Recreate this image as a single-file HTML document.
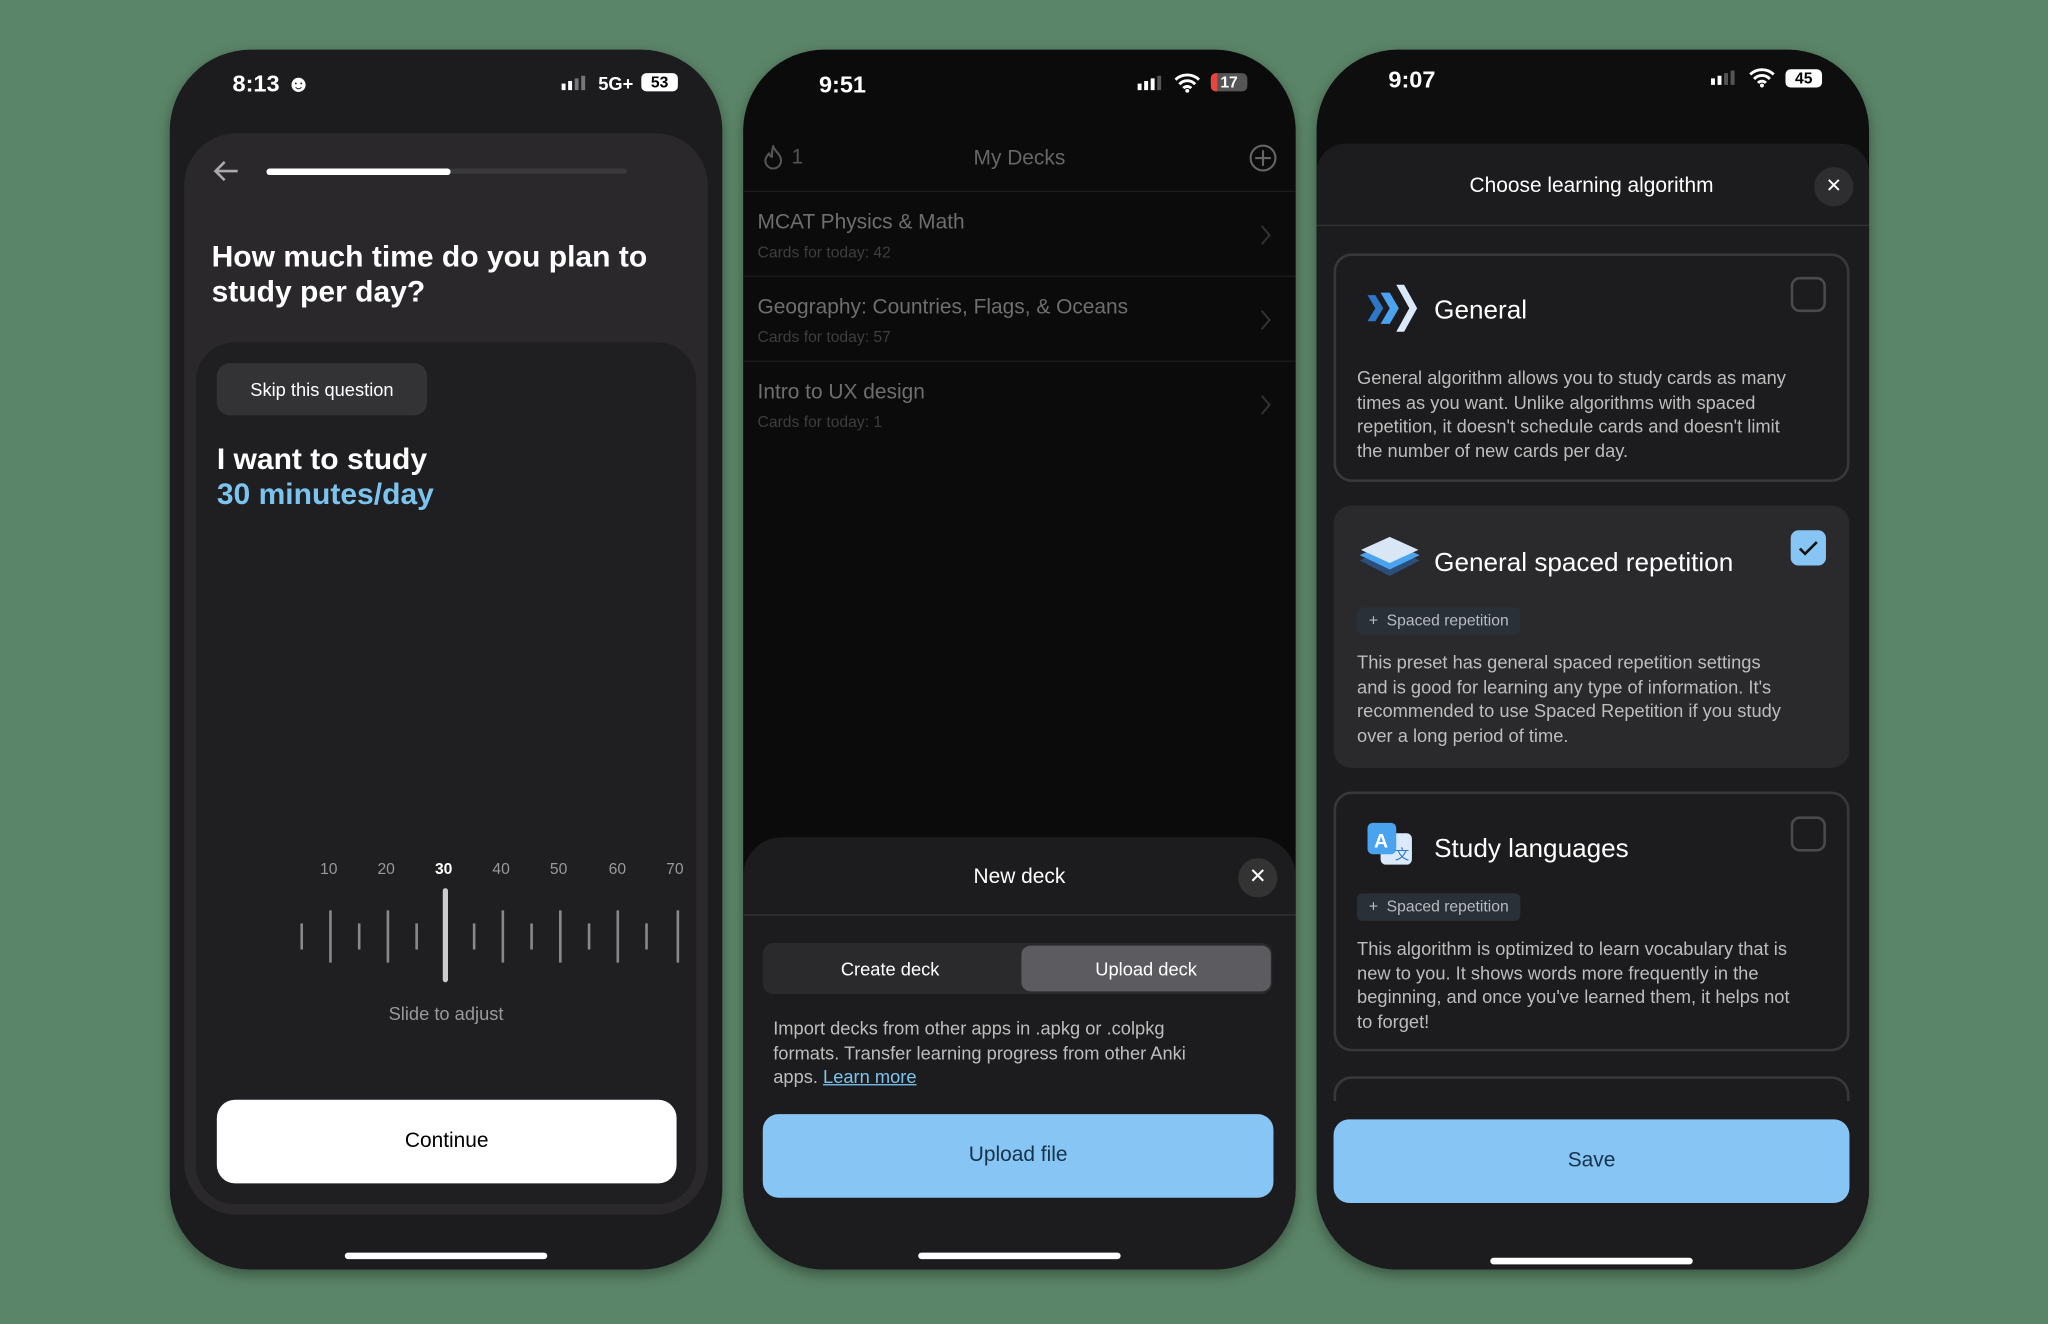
<!DOCTYPE html>
<html><head><meta charset="utf-8"><style>
*{margin:0;padding:0;box-sizing:border-box}
html,body{width:2048px;height:1324px;overflow:hidden;background:#5b8568}
#w{position:absolute;left:0;top:0;width:1568px;height:1014px;transform:scale(1.306122);transform-origin:0 0;font-family:"Liberation Sans",sans-serif;color:#fff}
.a{position:absolute}
.ph{position:absolute;top:38px;width:423px;height:934px;border-radius:62px;overflow:hidden;box-shadow:0 4px 10px rgba(0,0,0,.35)}
.time{position:absolute;font-size:18px;font-weight:bold}
.hi{position:absolute;height:5px;border-radius:3px;background:#fff;width:155px}
.t{white-space:nowrap}
.desc{font-size:14px;color:#bdbdbd;line-height:18.5px;white-space:nowrap}
.chip{position:absolute;left:18px;height:21px;padding:0 9px;background:#2a3038;border-radius:4px;font-size:12px;color:#b8bcc2;line-height:21px}
.cb{position:absolute;width:27px;height:27px;border:2px solid #4a4a4e;border-radius:7px}
</style></head><body><div id="w">

<!-- Phone 1 -->
<div class="ph" style="left:130px;background:#1c1b1d">
 <div class="time" style="left:48px;top:16px">8:13 ☻</div>
 <div class="a" style="left:300px;top:20px;width:22px;height:12px">
  <div class="a" style="left:0;top:6px;width:3px;height:5px;background:#fff"></div>
  <div class="a" style="left:5px;top:4px;width:3px;height:7px;background:#fff"></div>
  <div class="a" style="left:10px;top:2px;width:3px;height:9px;background:#777"></div>
  <div class="a" style="left:15px;top:0;width:3px;height:11px;background:#777"></div>
 </div>
 <div class="a t" style="left:328px;top:18px;font-size:14px;font-weight:bold">5G+</div>
 <div class="a" style="left:361px;top:18px;width:28px;height:14px;border-radius:4px;background:#fff;color:#000;font-size:12px;font-weight:bold;text-align:center;line-height:14px">53</div>
 <div class="a" style="left:11px;top:64px;width:401px;height:828px;background:#2a282b;border-radius:40px"></div>
 <svg class="a" style="left:32px;top:84px" width="22" height="18" viewBox="0 0 22 18"><path d="M20 9H3M10 2L3 9l7 7" stroke="#aaa" stroke-width="2" fill="none"/></svg>
 <div class="a" style="left:74px;top:91px;width:276px;height:4px;background:#3a393c;border-radius:2px"></div>
 <div class="a" style="left:74px;top:91px;width:141px;height:5px;background:#fff;border-radius:3px"></div>
 <div class="a" style="left:32px;top:145px;font-size:23px;font-weight:bold;line-height:27px">How much time do you plan to<br>study per day?</div>
 <div class="a" style="left:20px;top:224px;width:383px;height:660px;background:#1f1e20;border-radius:30px"></div>
 <div class="a t" style="left:36px;top:240px;width:161px;height:40px;background:#333235;border-radius:10px;font-size:14px;text-align:center;line-height:40px">Skip this question</div>
 <div class="a" style="left:36px;top:300px;font-size:23px;font-weight:bold;line-height:27px">I want to study<br><span style="color:#7cc4f0">30 minutes/day</span></div>
 <div class="a" style="left:0;top:620px;width:423px;height:16px;font-size:12px;color:#999">
  <span class="a" style="left:115px">10</span><span class="a" style="left:159px">20</span><span class="a" style="left:203px;color:#fff;font-weight:bold">30</span><span class="a" style="left:247px">40</span><span class="a" style="left:291px">50</span><span class="a" style="left:336px">60</span><span class="a" style="left:380px">70</span>
 </div>
 <svg class="a" style="left:0;top:640px" width="423" height="80">
  <g stroke="#888" stroke-width="2">
   <line x1="101" y1="29" x2="101" y2="49"/><line x1="123" y1="19" x2="123" y2="59"/><line x1="145" y1="29" x2="145" y2="49"/><line x1="167" y1="19" x2="167" y2="59"/><line x1="189" y1="29" x2="189" y2="49"/>
   <line x1="233" y1="29" x2="233" y2="49"/><line x1="255" y1="19" x2="255" y2="59"/><line x1="277" y1="29" x2="277" y2="49"/><line x1="299" y1="19" x2="299" y2="59"/><line x1="321" y1="29" x2="321" y2="49"/><line x1="343" y1="19" x2="343" y2="59"/><line x1="365" y1="29" x2="365" y2="49"/><line x1="389" y1="19" x2="389" y2="59"/>
  </g>
  <line x1="211" y1="4" x2="211" y2="72" stroke="#ccc" stroke-width="4" stroke-linecap="round"/>
 </svg>
 <div class="a t" style="left:0;width:423px;text-align:center;top:730px;font-size:14px;color:#999">Slide to adjust</div>
 <div class="a" style="left:36px;top:804px;width:352px;height:64px;background:#fff;border-radius:14px;color:#000;font-size:16px;text-align:center;line-height:64px">Continue</div>
 <div class="hi" style="left:134px;top:921px"></div>
</div>

<!-- Phone 2 -->
<div class="ph" style="left:569px;background:#0b0b0b">
 <div class="time" style="left:58px;top:17px">9:51</div>
 <div class="a" style="left:302px;top:20px;width:22px;height:12px">
  <div class="a" style="left:0;top:6px;width:3px;height:5px;background:#fff"></div>
  <div class="a" style="left:5px;top:4px;width:3px;height:7px;background:#fff"></div>
  <div class="a" style="left:10px;top:2px;width:3px;height:9px;background:#fff"></div>
  <div class="a" style="left:15px;top:0;width:3px;height:11px;background:#555"></div>
 </div>
 <svg class="a" style="left:330px;top:18px" width="20" height="15" viewBox="0 0 20 15"><path d="M1 5a13 13 0 0 1 18 0M4 8.5a8 8 0 0 1 12 0M7 11.5a4 4 0 0 1 6 0" stroke="#fff" stroke-width="2.2" fill="none"/><circle cx="10" cy="13.5" r="1.5" fill="#fff"/></svg>
 <div class="a" style="left:358px;top:18px;width:28px;height:14px;border-radius:4px;background:#555;overflow:hidden;font-size:12px;font-weight:bold;text-align:center;line-height:14px"><div class="a" style="left:0;top:0;width:5px;height:14px;background:#e8453c"></div><span style="position:relative">17</span></div>
 <svg class="a" style="left:15px;top:73px" width="16" height="20" viewBox="0 0 16 20"><path d="M8 1c1 4 6 6 6 11a6 6 0 0 1-12 0c0-3 2-4 3-6 0 2 1 3 2 3 0-3 0-5 1-8z" stroke="#555" stroke-width="1.6" fill="none"/></svg>
 <div class="a t" style="left:37px;top:74px;font-size:16px;color:#555">1</div>
 <div class="a t" style="left:0;width:423px;text-align:center;top:75px;font-size:16px;color:#666">My Decks</div>
 <svg class="a" style="left:387px;top:72px" width="22" height="22" viewBox="0 0 22 22"><circle cx="11" cy="11" r="9.5" stroke="#666" stroke-width="1.6" fill="none"/><path d="M11 5v12M5 11h12" stroke="#666" stroke-width="1.6"/></svg>
 <div class="a" style="left:0;top:108px;width:423px;height:1px;background:#1c1c1c"></div>
 <div class="a" style="left:0;top:173px;width:423px;height:1px;background:#1c1c1c"></div>
 <div class="a" style="left:0;top:238px;width:423px;height:1px;background:#1c1c1c"></div>
 <div class="a t" style="left:11px;top:124px;font-size:16px;color:#6e6e6e">MCAT Physics &amp; Math</div>
 <div class="a t" style="left:11px;top:148px;font-size:12px;color:#3e3e3e">Cards for today: 42</div>
 <div class="a t" style="left:11px;top:189px;font-size:16px;color:#6e6e6e">Geography: Countries, Flags, &amp; Oceans</div>
 <div class="a t" style="left:11px;top:213px;font-size:12px;color:#3e3e3e">Cards for today: 57</div>
 <div class="a t" style="left:11px;top:254px;font-size:16px;color:#6e6e6e">Intro to UX design</div>
 <div class="a t" style="left:11px;top:278px;font-size:12px;color:#3e3e3e">Cards for today: 1</div>
 <svg class="a" style="left:395px;top:133px" width="10" height="180"><g stroke="#333" stroke-width="1.5" fill="none"><path d="M2 2l6 7-6 7"/><path d="M2 67l6 7-6 7"/><path d="M2 132l6 7-6 7"/></g></svg>
 <div class="a" style="left:0;top:603px;width:423px;height:340px;background:#1c1c1e;border-radius:30px 30px 0 0"></div>
 <div class="a t" style="left:0;width:423px;text-align:center;top:625px;font-size:16px">New deck</div>
 <div class="a" style="left:379px;top:619px;width:30px;height:30px;border-radius:50%;background:#333;font-size:16px;text-align:center;line-height:30px">✕</div>
 <div class="a" style="left:0;top:662px;width:423px;height:1px;background:#333"></div>
 <div class="a" style="left:15px;top:684px;width:390px;height:39px;background:#2a2a2c;border-radius:8px"></div>
 <div class="a" style="left:213px;top:686px;width:191px;height:35px;background:#5c5c60;border-radius:7px"></div>
 <div class="a t" style="left:15px;width:195px;text-align:center;top:696px;font-size:14px">Create deck</div>
 <div class="a t" style="left:213px;width:191px;text-align:center;top:696px;font-size:14px">Upload deck</div>
 <div class="a desc" style="left:23px;top:740px">Import decks from other apps in .apkg or .colpkg<br>formats. Transfer learning progress from other Anki<br>apps. <span style="color:#7cc4f0;text-decoration:underline">Learn more</span></div>
 <div class="a" style="left:15px;top:815px;width:391px;height:64px;background:#86c5f4;border-radius:12px;color:#17324a;font-size:16px;text-align:center;line-height:64px">Upload file</div>
 <div class="hi" style="left:134px;top:921px"></div>
</div>

<!-- Phone 3 -->
<div class="ph" style="left:1008px;background:#0e0e0f">
 <div class="time" style="left:55px;top:13px">9:07</div>
 <div class="a" style="left:302px;top:16px;width:22px;height:12px">
  <div class="a" style="left:0;top:6px;width:3px;height:5px;background:#fff"></div>
  <div class="a" style="left:5px;top:4px;width:3px;height:7px;background:#fff"></div>
  <div class="a" style="left:10px;top:2px;width:3px;height:9px;background:#555"></div>
  <div class="a" style="left:15px;top:0;width:3px;height:11px;background:#555"></div>
 </div>
 <svg class="a" style="left:331px;top:14px" width="20" height="15" viewBox="0 0 20 15"><path d="M1 5a13 13 0 0 1 18 0M4 8.5a8 8 0 0 1 12 0M7 11.5a4 4 0 0 1 6 0" stroke="#fff" stroke-width="2.2" fill="none"/><circle cx="10" cy="13.5" r="1.5" fill="#fff"/></svg>
 <div class="a" style="left:359px;top:15px;width:28px;height:14px;border-radius:4px;background:#fff;color:#000;font-size:12px;font-weight:bold;text-align:center;line-height:14px">45</div>
 <div class="a" style="left:0;top:72px;width:423px;height:870px;background:#1c1b1d;border-radius:22px 22px 0 0"></div>
 <div class="a t" style="left:0;width:421px;text-align:center;top:96px;font-size:16px">Choose learning algorithm</div>
 <div class="a" style="left:381px;top:90px;width:30px;height:30px;border-radius:50%;background:#2e2e30;font-size:15px;text-align:center;line-height:30px">✕</div>
 <div class="a" style="left:0;top:134px;width:423px;height:1px;background:#333"></div>

 <div class="a" style="left:13px;top:156px;width:395px;height:175px;border:2px solid #38373b;border-radius:14px">
  <svg class="a" style="left:20px;top:18px" width="44" height="44" viewBox="0 0 44 44"><path d="M4 12l6 10-6 10h6l6-10-6-10z" fill="#2d77c9"/><path d="M14 10l7 12-7 12h7l7-12-7-12z" fill="#4aa3ef"/><path d="M26 4l10 18-10 18h6l10-18-10-18z" fill="#dbeafb"/></svg>
  <div class="a t" style="left:75px;top:31px;font-size:20px">General</div>
  <div class="cb" style="left:348px;top:16px"></div>
  <div class="a desc" style="left:16px;top:84px">General algorithm allows you to study cards as many<br>times as you want. Unlike algorithms with spaced<br>repetition, it doesn't schedule cards and doesn't limit<br>the number of new cards per day.</div>
 </div>

 <div class="a" style="left:13px;top:349px;width:395px;height:201px;background:#2a292b;border-radius:14px">
  <svg class="a" style="left:18px;top:22px" width="50" height="38" viewBox="0 0 50 38"><path d="M2 20l23-10 23 10-23 12z" fill="#2c4f7a"/><path d="M2 16l23-10 23 10-23 11z" fill="#4aa3ef"/><path d="M3 12l22-10 22 10-22 10z" fill="#d8e6f5"/></svg>
  <div class="a t" style="left:77px;top:33px;font-size:20px">General spaced repetition</div>
  <div class="a" style="left:350px;top:19px;width:27px;height:27px;background:#86c5f4;border-radius:6px"><svg width="27" height="27"><path d="M7 14l4 4 9-9" stroke="#111" stroke-width="2" fill="none"/></svg></div>
  <div class="chip" style="top:78px">+&nbsp; Spaced repetition</div>
  <div class="a desc" style="left:18px;top:111px">This preset has general spaced repetition settings<br>and is good for learning any type of information. It's<br>recommended to use Spaced Repetition if you study<br>over a long period of time.</div>
 </div>

 <div class="a" style="left:13px;top:568px;width:395px;height:199px;border:2px solid #38373b;border-radius:14px">
  <svg class="a" style="left:22px;top:20px" width="40" height="40" viewBox="0 0 40 40"><rect x="12" y="10" width="24" height="24" rx="4" fill="#dbeafb"/><rect x="2" y="2" width="22" height="24" rx="4" fill="#4aa3ef"/><text x="7" y="21" font-size="15" font-family="Liberation Sans" fill="#fff" font-weight="bold">A</text><text x="23" y="30" font-size="11" fill="#2d77c9">文</text></svg>
  <div class="a t" style="left:75px;top:31px;font-size:20px">Study languages</div>
  <div class="cb" style="left:348px;top:17px"></div>
  <div class="chip" style="top:76px;left:16px">+&nbsp; Spaced repetition</div>
  <div class="a desc" style="left:16px;top:109px">This algorithm is optimized to learn vocabulary that is<br>new to you. It shows words more frequently in the<br>beginning, and once you've learned them, it helps not<br>to forget!</div>
 </div>
 <div class="a" style="left:13px;top:786px;width:395px;height:60px;border:2px solid #38373b;border-radius:14px"></div>
 <div class="a" style="left:0;top:805px;width:423px;height:140px;background:#1c1b1d"></div>
 <div class="a" style="left:13px;top:819px;width:395px;height:64px;background:#86c5f4;border-radius:12px;color:#17324a;font-size:16px;text-align:center;line-height:64px">Save</div>
 <div class="hi" style="left:133px;top:925px"></div>
</div>

</div></body></html>
